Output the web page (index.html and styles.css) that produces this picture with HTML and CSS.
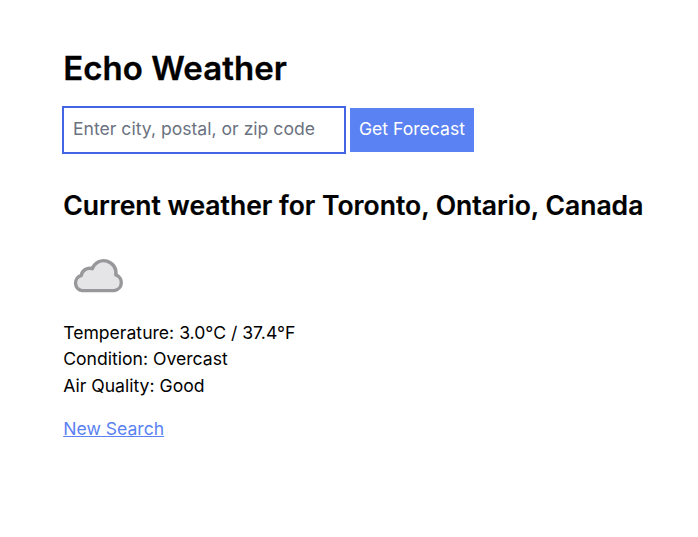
FILE: index.html
```html
<!DOCTYPE html>
<html lang="en">
<head>
<meta charset="utf-8">
<title>Echo Weather</title>
<link rel="stylesheet" href="styles.css">
</head>
<body>
<main class="page">
  <h1 class="title">Echo Weather</h1>
  <form class="search">
    <input class="field" type="text" placeholder="Enter city, postal, or zip code">
    <button class="submit" type="button">Get Forecast</button>
  </form>
  <h2 class="subtitle">Current weather for Toronto, Ontario, Canada</h2>
  <svg class="icon" viewBox="0 0 70 70" aria-hidden="true">
    <path d="M19.200 49.600A7.700 7.700 0 0 1 18.300 34.500A8.300 8.300 0 0 1 29.300 27.700A12.200 12.200 0 0 1 52.800 33.900A8.100 8.100 0 0 1 51.300 49.600Z"/>
  </svg>
  <ul class="details">
    <li>Temperature: 3.0°C / 37.4°F</li>
    <li>Condition: Overcast</li>
    <li>Air Quality: Good</li>
  </ul>
  <a class="link" href="#">New Search</a>
</main>
</body>
</html>
```
FILE: styles.css
```css
* { box-sizing: border-box; }
body {
  margin: 0;
  background: #fff;
  color: #000;
  font-family: Inter, sans-serif;
  font-size: 17.6px;
  line-height: 26.4px;
}
.page { padding: 48px 0 0 63.2px; }
.title { margin: 0; font-size: 33px; line-height: 40px; font-weight: 600; letter-spacing: .05px; -webkit-text-stroke: .3px #000; }
.search { display: flex; margin: 20px 0 0 .8px; gap: 6px; }
.field {
  width: 280px;
  height: 44px;
  padding: 0 9px 3px;
  border: 0;
  outline: 2px solid #4364e4;
  font: inherit;
}
.field::placeholder { color: #6b7280; opacity: 1; }
.submit {
  width: 124px;
  height: 44px;
  padding: 0 0 2px;
  border: 0;
  background: #5a82f2;
  color: #fff;
  font: inherit;
}
.subtitle { margin: 36px 0 0; font-size: 26.5px; line-height: 35px; font-weight: 600; white-space: nowrap; -webkit-text-stroke: .2px #000; }
.icon { display: block; width: 70px; height: 70px; margin: 18px 0 0; fill: #e5e5e8; stroke: #98989a; stroke-width: 3.4; stroke-linejoin: round; }
.details { margin: 9px 0 0; padding: 0; list-style: none; }
.link { display: inline-block; margin-top: 16.5px; color: #5a82f2; }
```
